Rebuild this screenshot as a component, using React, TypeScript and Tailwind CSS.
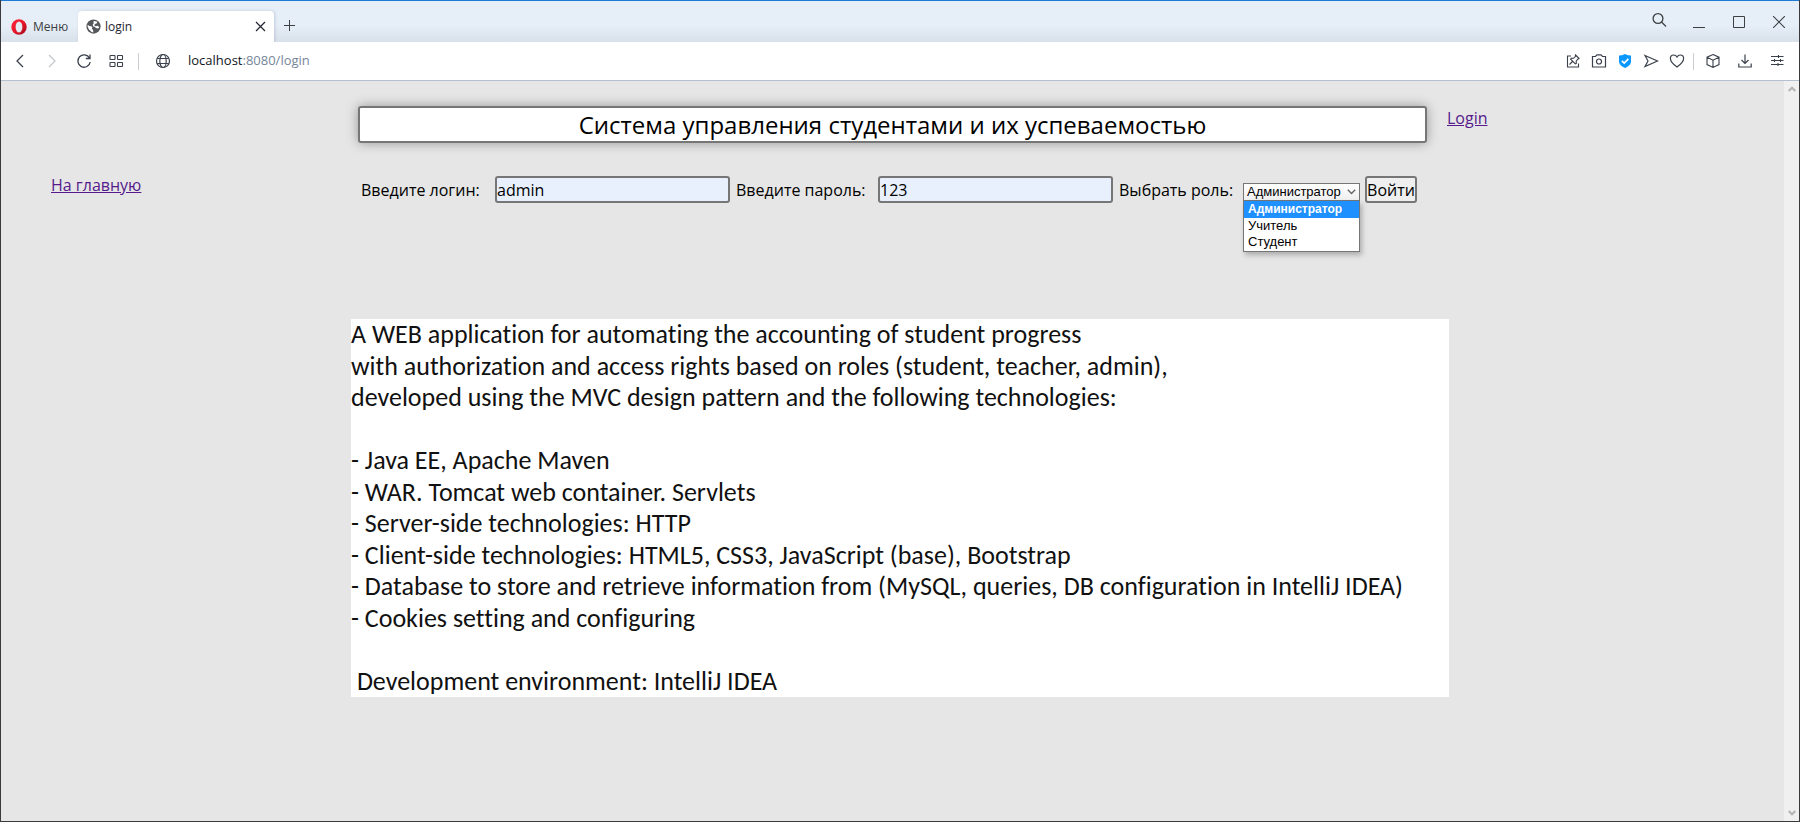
import type { ReactNode } from "react";

type IconButtonProps = {
  label: string;
  className: string;
  children: ReactNode;
};

function IconButton({ label, className, children }: IconButtonProps) {
  return (
    <button type="button" aria-label={label} className={`flex shrink-0 items-center justify-center ${className}`}>
      {children}
    </button>
  );
}

type GlyphProps = { size?: number; width?: number; children: ReactNode };

function Glyph({ size = 16, width = 1.2, children }: GlyphProps) {
  return (
    <svg
      width={size}
      height={size}
      viewBox={`0 0 ${size} ${size}`}
      fill="none"
      stroke="currentColor"
      strokeWidth={width}
      aria-hidden="true"
      className="shrink-0"
    >
      {children}
    </svg>
  );
}

function TabBar() {
  return (
    <div className="flex h-[42px] items-stretch border-t border-[#1c7cd5] bg-linear-to-b from-[#e6eef7] from-60% to-[#d8e0ea] text-[#3c4043]">
      <button type="button" className="flex w-[77px] shrink-0 items-center gap-[6px] pt-[10px] pl-[10px] text-[12px]">
        <svg width="16" height="16" viewBox="0 0 16 16" aria-hidden="true" className="shrink-0">
          <defs>
            <linearGradient id="opera" x1="0" y1="0" x2="1" y2="1">
              <stop offset="0" stopColor="#ff2a3d" />
              <stop offset="0.5" stopColor="#e8152b" />
              <stop offset="1" stopColor="#9c0a17" />
            </linearGradient>
          </defs>
          <circle cx="8" cy="8" r="7.7" fill="url(#opera)" />
          <ellipse cx="8" cy="8" rx="3.4" ry="5.6" fill="#e2eaf3" />
        </svg>
        Меню
      </button>
      <div className="mt-[10px] flex w-[196px] shrink-0 items-center rounded-t-sm bg-white pl-2 text-[12px] text-[#1f2430] shadow-[1px_0_3px_rgba(120,140,170,0.35)]">
        <svg width="15" height="15" viewBox="0 0 16 16" aria-hidden="true" className="mr-1 shrink-0">
          <circle cx="8" cy="8" r="7.6" fill="#54575a" />
          <path
            fill="#fff"
            d="M1.800 6 3.500 7.400 5.800 7.800 6.800 9 6.200 10.400 7.600 11.800 7.800 14.300 6 13.800 3 11 1.700 8ZM8.600 2 12 3 11.600 4.600 9.600 5.200 8.800 6.600 10.200 7.600 12.800 7.200 14.200 9 12.600 10.200 10.600 9.600 9.200 8.300 7.400 7.600 7.300 5.600 8.500 4.300 7.600 3.200Z"
          />
        </svg>
        <span className="min-w-0 flex-1 truncate">login</span>
        <IconButton label="Закрыть вкладку" className="w-[27px]">
          <Glyph size={11} width={1.2}>
            <path d="m1 1 9 9M10 1l-9 9" />
          </Glyph>
        </IconButton>
      </div>
      <IconButton label="Новая вкладка" className="w-[31px] pt-[8px]">
        <Glyph size={11} width={1}>
          <path d="M5.500 0v11M0 5.500h11" />
        </Glyph>
      </IconButton>
      <div className="flex-1" />
      <IconButton label="Поиск по вкладкам" className="w-10 pb-[3px]">
        <Glyph width={1.3}>
          <circle cx="7" cy="6.500" r="4.900" />
          <path d="m10.500 10 4.500 4.500" />
        </Glyph>
      </IconButton>
      <IconButton label="Свернуть" className="w-10 pt-[10px]">
        <Glyph size={12} width={1}>
          <path d="M0 6.500h12" />
        </Glyph>
      </IconButton>
      <IconButton label="Развернуть" className="w-10">
        <Glyph size={12} width={1}>
          <path d="M.500.500h11v11H.500z" />
        </Glyph>
      </IconButton>
      <IconButton label="Закрыть" className="w-10">
        <Glyph size={12} width={1.1}>
          <path d="m0 0 12 12M12 0 0 12" />
        </Glyph>
      </IconButton>
    </div>
  );
}

function AddressBar() {
  return (
    <div className="flex h-[39px] items-center border-b border-[#b3c0cf] bg-white pr-[6px] pl-[3px] text-[#3a414b]">
      <IconButton label="Назад" className="h-8 w-8">
        <Glyph width={1.3}>
          <path d="M11 2 5 8l6 6" />
        </Glyph>
      </IconButton>
      <IconButton label="Вперёд" className="h-8 w-8 text-[#c4c7cb]">
        <Glyph width={1.3}>
          <path d="m5 2 6 6-6 6" />
        </Glyph>
      </IconButton>
      <IconButton label="Обновить" className="h-8 w-8">
        <Glyph width={1.3}>
          <path d="M13.500 5A6.200 6.200 0 1 0 14.200 9M14 1.500V5.500H9.800" />
        </Glyph>
      </IconButton>
      <IconButton label="Экспресс-панель" className="h-8 w-8">
        <Glyph width={1.1}>
          <rect x="2" y="2.500" width="5" height="4" rx=".5" />
          <rect x="9.500" y="2.500" width="5" height="4" rx=".5" />
          <rect x="2" y="9.500" width="5" height="4" rx=".5" />
          <rect x="9.500" y="9.500" width="5" height="4" rx=".5" />
        </Glyph>
      </IconButton>
      <div className="mr-2 ml-[6px] h-[17px] w-px bg-[#c9ccd0]" />
      <IconButton label="Сведения о сайте" className="h-8 w-8">
        <Glyph width={1.2}>
          <circle cx="8" cy="8" r="6.500" />
          <ellipse cx="8" cy="8" rx="3.200" ry="6.500" />
          <path d="M2.300 5.500h11.400M2.300 10.500h11.400" />
        </Glyph>
      </IconButton>
      <div className="ml-[9px] min-w-0 flex-1 truncate text-[13px] text-[#10151c]">
        localhost<span className="text-[#76869a]">:8080/login</span>
      </div>
      <IconButton label="Закрепить" className="h-8 w-[26px]">
        <Glyph width={1.1}>
          <path d="M6 3H2.500v11h11V10.500" />
          <path d="M10.500 2 14 5.500l-1.200.700-1.600 1.900.100 2.300-1 .500L5.600 6.200l.600-.800 2.200-.100 1.800-1.500ZM7.500 8.500 4.500 11.500" />
        </Glyph>
      </IconButton>
      <IconButton label="Снимок" className="h-8 w-[26px]">
        <Glyph width={1.2}>
          <path d="M1.500 3.500H4.500L6 1.800h4l1.500 1.700h3v10.500H1.500Z" />
          <circle cx="8" cy="8.500" r="2.500" />
        </Glyph>
      </IconButton>
      <IconButton label="Блокировка рекламы" className="h-8 w-[26px]">
        <svg width="16" height="16" viewBox="0 0 16 16" aria-hidden="true">
          <path fill="#0a98ff" d="M8 1c2 1 4 1.500 6 1.500v6c0 3-2.500 5-6 6.500-3.500-1.500-6-3.500-6-6.500v-6C4 2.500 6 2 8 1Z" />
          <path fill="none" stroke="#fff" strokeWidth="1.700" d="m4.800 7.800 2.400 2.300 4.200-4.200" />
        </svg>
      </IconButton>
      <IconButton label="Отправить" className="h-8 w-[26px]">
        <Glyph width={1.2}>
          <path d="M2 2.500 14.500 8 2 13.500 5 8Z" />
        </Glyph>
      </IconButton>
      <IconButton label="В избранное" className="h-8 w-[26px]">
        <Glyph width={1.2}>
          <path d="M8 14C4.500 11.500 1.400 8.800 1.400 5.500 1.400 3.400 3 2 4.700 2 6.200 2 7.300 2.800 8 4c.700-1.200 1.800-2 3.300-2 1.700 0 3.300 1.400 3.300 3.500 0 3.300-3.100 6-6.600 8.500Z" />
        </Glyph>
      </IconButton>
      <div className="mx-[3px] h-[17px] w-px bg-[#c9ccd0]" />
      <IconButton label="Крипто-кошелёк" className="h-8 w-8">
        <Glyph width={1.1}>
          <path d="m8 1.500 6 2.700v7.400l-6 2.900-6-2.900V4.200ZM2 4.200l6 3 6-3M8 7.200v7.300" />
        </Glyph>
      </IconButton>
      <IconButton label="Загрузки" className="h-8 w-8">
        <Glyph width={1.2}>
          <path d="M8 1.500v9M4.500 7 8 10.500 11.500 7M1.800 10.500V14h12.400V10.500" />
        </Glyph>
      </IconButton>
      <IconButton label="Простая настройка" className="h-8 w-8">
        <Glyph width={1.1}>
          <path d="M2 3.500h12.500M2 7.500h12.500M2 11.500h12.500M9.500 2v3M5.500 6v3M11.500 6v3M9 10v3" />
        </Glyph>
      </IconButton>
    </div>
  );
}

const roles = ["Администратор", "Учитель", "Студент"];

function RoleSelect() {
  return (
    <div className="relative mt-[5px] w-[117px] shrink-0 font-['Liberation_Sans',sans-serif] text-[13px] leading-[16px] text-black">
      <select
        id="role"
        defaultValue={roles[0]}
        className="block h-[18px] w-full appearance-none border border-[#767676] bg-linear-to-b from-white to-[#efefef] pl-[3px] leading-[16px]"
      >
        {roles.map((role) => (
          <option key={role}>{role}</option>
        ))}
      </select>
      <svg width="9" height="6" viewBox="0 0 9 6" aria-hidden="true" className="pointer-events-none absolute top-[6px] right-[4px]">
        <path d="m.800.800 3.700 3.700L8.200.800" fill="none" stroke="#666" strokeWidth="1.400" />
      </svg>
      <ul
        role="listbox"
        aria-label="Роль"
        className="absolute top-[18px] left-0 w-full border border-t-0 border-[#767676] bg-white pb-px shadow-[2px_3px_5px_rgba(0,0,0,0.25)]"
      >
        {roles.map((role, i) => (
          <li
            key={role}
            role="option"
            aria-selected={i === 0}
            className="px-1 aria-selected:bg-[#1e90ff] aria-selected:pb-px aria-selected:text-[12px] aria-selected:font-bold aria-selected:text-white"
          >
            {role}
          </li>
        ))}
      </ul>
    </div>
  );
}

const field = "mr-[6px] h-[27px] w-[235px] shrink-0 rounded-[3px] border-2 border-[#767676] bg-[#e8f0fe]";

function LoginForm() {
  return (
    <form className="flex h-[27px] items-center pl-[10px] whitespace-nowrap" onSubmit={(e) => e.preventDefault()}>
      <label htmlFor="login" className="w-[134px] shrink-0">
        Введите логин:
      </label>
      <input id="login" type="text" defaultValue="admin" className={field} />
      <label htmlFor="password" className="w-[142px] shrink-0">
        Введите пароль:
      </label>
      <input id="password" type="text" defaultValue="123" className={field} />
      <label htmlFor="role" className="w-[124px] shrink-0">
        Выбрать роль:
      </label>
      <RoleSelect />
      <button type="submit" className="ml-[5px] h-[27px] w-[52px] shrink-0 rounded-[3px] border-2 border-[#767676] bg-[#efefef]">
        Войти
      </button>
    </form>
  );
}

const lines = [
  "A WEB application for automating the accounting of student progress",
  "with authorization and access rights based on roles (student, teacher, admin),",
  "developed using the MVC design pattern and the following technologies:",
  "",
  "- Java EE, Apache Maven",
  "- WAR. Tomcat web container. Servlets",
  "- Server-side technologies: HTTP",
  "- Client-side technologies: HTML5, CSS3, JavaScript (base), Bootstrap",
  "- Database to store and retrieve information from (MySQL, queries, DB configuration in IntelliJ IDEA)",
  "- Cookies setting and configuring",
  "",
  " Development environment: IntelliJ IDEA",
];

function Description() {
  return (
    <section className="grid h-[378px] grid-rows-12 bg-white font-[Carlito,Lato,sans-serif] text-[26px] leading-[31px] whitespace-pre text-[#111] [font-variant-ligatures:none]">
      {lines.map((line, i) => (
        <p key={i}>{line}</p>
      ))}
    </section>
  );
}

function ScrollBar() {
  return (
    <div className="flex w-[15px] shrink-0 flex-col items-center justify-between bg-[#f0f0f0] py-1 text-[#b4b4b4]">
      <Glyph size={8} width={2}>
        <path d="m.700 6 3.300-3.300L7.300 6" />
      </Glyph>
      <Glyph size={8} width={2}>
        <path d="M.700 2 4 5.300 7.300 2" />
      </Glyph>
    </div>
  );
}

export default function App() {
  return (
    <div className="flex min-h-screen flex-col border-x border-b border-[#3a3a3a] bg-[#e6e6e6] font-['Open_Sans',sans-serif]">
      <TabBar />
      <AddressBar />
      <div className="flex flex-1 items-stretch">
        <main className="grid min-w-0 flex-1 grid-cols-[350px_minmax(0,1fr)_335px] content-start pt-[25px] font-['Comic_Sans_MS','Open_Sans',sans-serif] text-[16px] leading-[22px] text-black">
          <header className="col-start-2 mr-[22px] ml-[7px]">
            <h1 className="rounded-[3px] border-2 border-[#767676] bg-white text-center text-[24px] leading-[33px] shadow-[0_0_12px_rgba(0,0,0,0.35)]">
              Система управления студентами и их успеваемостью
            </h1>
          </header>
          <a href="#login" className="mt-px -ml-[2px] justify-self-start text-[#551a8b] underline">
            Login
          </a>
          <nav className="col-start-1 pt-[31px] pl-[50px]">
            <a href="#home" className="text-[#551a8b] underline">
              На главную
            </a>
          </nav>
          <div className="pt-[33px]">
            <LoginForm />
          </div>
          <div className="col-start-2 pt-[116px]">
            <Description />
          </div>
        </main>
        <ScrollBar />
      </div>
    </div>
  );
}
